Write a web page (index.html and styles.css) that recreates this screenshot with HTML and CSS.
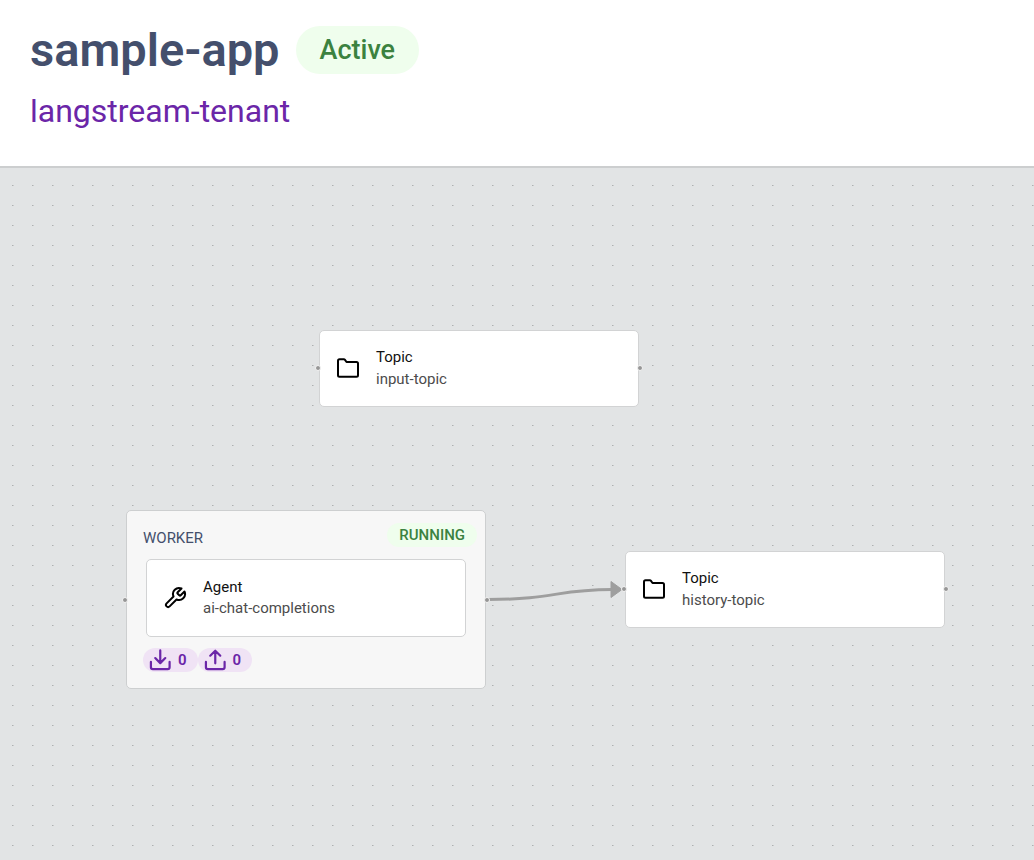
FILE: index.html
```html
<!DOCTYPE html>
<html lang="en">
<head>
<meta charset="utf-8">
<meta name="viewport" content="width=device-width, initial-scale=1">
<title>sample-app</title>
<link rel="stylesheet" href="styles.css">
</head>
<body>
<header class="header">
  <div class="title-row">
    <h1 class="title">sample-app</h1>
    <span class="status">Active</span>
  </div>
  <p class="tenant">langstream-tenant</p>
</header>
<main class="canvas">
  <svg class="layer" aria-hidden="true">
    <defs>
      <pattern id="dots" width="20" height="20" patternUnits="userSpaceOnUse">
        <rect x="12" y="17" width="1" height="1" fill="#aeb0b1"/>
        <rect x="13" y="17" width="1" height="1" fill="#c8cacb"/>
      </pattern>
    </defs>
    <rect width="100%" height="100%" fill="url(#dots)"/>
    <path d="M488 431.500C556 431.500 556 421.500 612 421.500" fill="none" stroke="#9e9e9e" stroke-width="3"/>
    <path d="M611 413.500L622 421.500L611 429.500Z" fill="#9e9e9e" stroke="#9e9e9e" stroke-linejoin="round"/>
  </svg>

  <article class="node card topic-input">
    <span class="port port-left"></span>
    <svg class="icon" viewBox="0 0 24 24"><path d="M22 18.300a1.500 1.500 0 0 1-1.500 1.500h-17A1.500 1.500 0 0 1 2 18.300V3.800A1.500 1.500 0 0 1 3.500 2.300h4.300a1.500 1.500 0 0 1 1.200.6L10.500 5h10A1.500 1.500 0 0 1 22 6.500z"/></svg>
    <div class="text"><h2 class="kind">Topic</h2><p class="name">input-topic</p></div>
    <span class="port port-right"></span>
  </article>

  <article class="node worker">
    <span class="port port-left"></span>
    <div class="worker-head">
      <h2 class="worker-label">WORKER</h2>
      <span class="running">RUNNING</span>
    </div>
    <div class="card agent">
      <svg class="icon" viewBox="0 0 24 24"><path d="M14.700 6.300a1 1 0 0 0 0 1.400l1.600 1.600a1 1 0 0 0 1.400 0l3.770-3.770a6 6 0 0 1-7.940 7.940l-6.910 6.910a2.120 2.120 0 0 1-3-3l6.910-6.910a6 6 0 0 1 7.940-7.940l-3.760 3.760z"/></svg>
      <div class="text"><h3 class="kind">Agent</h3><p class="name">ai-chat-completions</p></div>
    </div>
    <div class="counters">
      <span class="counter"><svg class="count-icon" viewBox="0 0 24 24"><path d="M2 14v5.500a2 2 0 0 0 2 2h15.500a2 2 0 0 0 2-2V14M11.750 2v13M6.500 10l5.250 5.250L17 10"/></svg>0</span>
      <span class="counter"><svg class="count-icon" viewBox="0 0 24 24"><path d="M2 14v5.500a2 2 0 0 0 2 2h15.500a2 2 0 0 0 2-2V14M11.750 15.500V2.500M6.500 7.500l5.250-5.250L17 7.500"/></svg>0</span>
    </div>
    <span class="port port-right"></span>
  </article>

  <article class="node card topic-history">
    <span class="port port-left"></span>
    <svg class="icon" viewBox="0 0 24 24"><path d="M22 18.300a1.500 1.500 0 0 1-1.500 1.500h-17A1.500 1.500 0 0 1 2 18.300V3.800A1.500 1.500 0 0 1 3.500 2.300h4.300a1.500 1.500 0 0 1 1.200.6L10.500 5h10A1.500 1.500 0 0 1 22 6.500z"/></svg>
    <div class="text"><h2 class="kind">Topic</h2><p class="name">history-topic</p></div>
    <span class="port port-right"></span>
  </article>
</main>
</body>
</html>
```
FILE: styles.css
```css
* { box-sizing: border-box; }
body {
  margin: 0;
  min-height: 100vh;
  display: flex;
  flex-direction: column;
  font-family: Roboto, "Liberation Sans", sans-serif;
  background: #fff;
}
h1, h2, h3, p { margin: 0; font-weight: 400; }

.header { padding: 22px 30px 34px; border-bottom: 2px solid #cccecf; }
.title-row { display: flex; align-items: center; gap: 16px; }
.title { font-size: 47px; line-height: 56px; font-weight: 600; color: #444f6c; }
.status {
  padding: 0 24px;
  border-radius: 24px;
  background: #effeed;
  color: #3b823f;
  font-size: 27px;
  line-height: 48px;
  font-weight: 500;
}
.tenant { margin-top: 12px; font-size: 32px; line-height: 42px; color: #6b26a8; }

.canvas { position: relative; flex: 1; background: #e2e4e5; overflow: hidden; }
.layer { position: absolute; inset: 0; width: 100%; height: 100%; }

.node { position: absolute; }
.topic-input { left: 319px; top: 162px; }
.topic-history { left: 625px; top: 383px; }
.card {
  display: flex;
  align-items: center;
  gap: 16px;
  width: 320px;
  padding: 16px;
  border: 1px solid #d2d3d4;
  border-radius: 5px;
  background: #fff;
}
.icon {
  width: 24px;
  height: 24px;
  fill: none;
  stroke: #000;
  stroke-width: 2;
  stroke-linecap: round;
  stroke-linejoin: round;
}
.kind { font-size: 15px; line-height: 21px; color: #111; }
.name { font-size: 15px; line-height: 22px; color: #4c4c4c; }

.worker {
  left: 126px;
  top: 342px;
  width: 360px;
  padding: 12px 8px 16px 16px;
  border: 1px solid #cdcfd0;
  border-radius: 5px;
  background: #f7f7f7;
}
.worker-head { display: flex; justify-content: space-between; align-items: center; }
.worker-label { padding-top: 6px; font-size: 15px; line-height: 18px; color: #444f6c; }
.running {
  padding: 0 12px;
  border-radius: 12px;
  background: #effeed;
  color: #3b823f;
  font-size: 15px;
  line-height: 24px;
  font-weight: 500;
}
.agent { margin: 12px 0 11px 3px; padding: 17px 16px; }
.agent .name { line-height: 21px; }

.counters { display: flex; }
.counter {
  display: flex;
  align-items: center;
  gap: 6px;
  padding: 0 11px 0 6px;
  border-radius: 12px;
  background: #f0e3f5;
  color: #6b26a8;
  font-size: 15px;
  line-height: 24px;
  font-weight: 600;
}
.count-icon {
  width: 23px;
  height: 24px;
  fill: none;
  stroke: currentColor;
  stroke-width: 2.3;
  stroke-linecap: round;
  stroke-linejoin: round;
}

.port {
  position: absolute;
  top: 50%;
  width: 6px;
  height: 6px;
  margin-top: -4px;
  border: 1px solid #f4f4f4;
  border-radius: 50%;
  background: #969696;
}
.worker .port { margin-top: -3px; }
.port-left { left: -5px; }
.port-right { right: -5px; }
```
